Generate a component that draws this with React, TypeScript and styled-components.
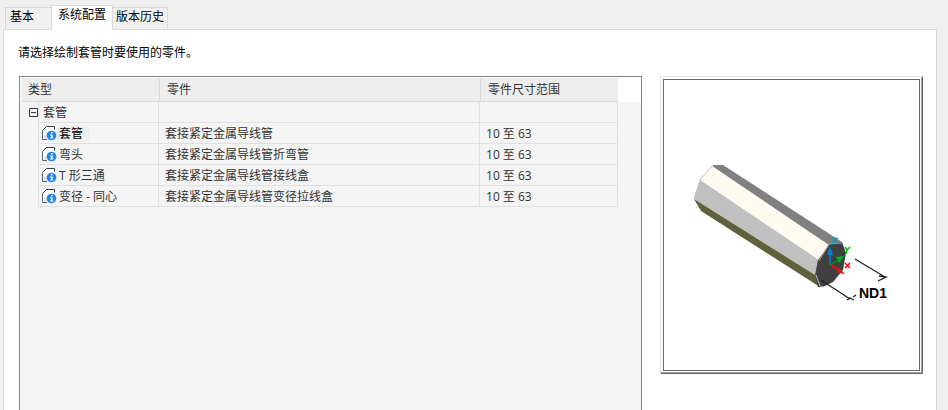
import React, { useState } from "react";
import styled, { createGlobalStyle } from "styled-components";

const GlobalStyle = createGlobalStyle`
  *, *::before, *::after { box-sizing: border-box; }
  body {
    margin: 0;
    background: #f0f0f0;
    color: #000;
    font: 12px/16px "Open Sans", "Noto Sans CJK SC", sans-serif;
  }
`;

const Page = styled.main`
  display: flex;
  flex-direction: column;
  min-height: 100vh;
  padding: 5px 11px 0 3px;
`;

const TabList = styled.div`
  display: flex;
  align-items: flex-end;
  height: 25px;
  margin-bottom: -1px;
  padding-left: 2px;
`;

const Tab = styled.button<{ $active: boolean; $wide?: boolean }>`
  position: relative;
  height: ${(p) => (p.$active ? 25 : 23)}px;
  padding: ${(p) => (p.$active ? "0 6px 5px" : p.$wide ? "0 17px 3px 4px" : "0 3px 3px")};
  border: 1px solid #d9d9d9;
  border-bottom-color: ${(p) => (p.$active ? "#fff" : "#d9d9d9")};
  margin-right: -1px;
  z-index: ${(p) => (p.$active ? 1 : 0)};
  background: ${(p) => (p.$active ? "#fff" : "#f0f0f0")};
  color: #000;
  font: inherit;
`;

const Panel = styled.section`
  flex: 1;
  display: flex;
  flex-direction: column;
  padding: 15px 13px 0 15px;
  border: 1px solid #d9d9d9;
  border-bottom: 0;
  background: #fff;
`;

const Prompt = styled.p`
  margin: 0 0 15px -1px;
`;

const Columns = styled.div`
  flex: 1;
  display: flex;
  gap: 18px;
`;

const GridFrame = styled.div`
  flex: 1;
  padding: 1px;
  border: 1px solid #828790;
  border-bottom: 0;
  background: linear-gradient(#fff 25px, #f4f4f4 25px);
`;

const PartTable = styled.table`
  width: 597px;
  border-spacing: 0;
  table-layout: fixed;
  color: #333;
`;

const HeadCell = styled.th`
  height: 24px;
  padding: 0 7px;
  border-bottom: 1px solid #d9d9d9;
  background: #eee;
  font-weight: 400;
  text-align: left;

  & + & {
    border-left: 1px solid #d9d9d9;
  }
`;

const Cell = styled.td`
  height: 21px;
  padding: 2px 6px 0;
  border-right: 1px solid #e0e0e0;
  border-bottom: 1px solid #e0e0e0;
`;

const Gutter = styled.td`
  padding: 0 0 0 8px;
  border-right: 1px solid #e0e0e0;
`;

const TypeCell = styled(Cell)`
  padding: 2px 3px 0;
`;

const TypeLabel = styled.span<{ $selected?: boolean }>`
  display: flex;
  align-items: center;
  color: ${(p) => (p.$selected ? "#000" : "inherit")};
`;

const LabelText = styled.span<{ $selected?: boolean }>`
  padding: 0 6px 0 2px;
  background: ${(p) => (p.$selected ? "#eee" : "transparent")};
`;

const GroupLabel = styled.span`
  padding-left: 1px;
`;

const Toggle = styled.button`
  display: block;
  width: 9px;
  height: 9px;
  padding: 0;
  border: 0;
  background: none;

  svg { display: block; }
`;

const Preview = styled.figure`
  flex: none;
  align-self: flex-start;
  width: 263px;
  margin: 0;
  border: 1px solid;
  border-color: #e3e3e3 #696969 #696969 #e3e3e3;
`;

const PreviewBevel = styled.div`
  padding: 1px;
  border: 1px solid;
  border-color: #fff #a0a0a0 #a0a0a0 #fff;
`;

const PreviewCanvas = styled.div`
  border: 1px solid #696969;
  background: #fff;

  svg { display: block; width: 100%; height: auto; }
`;

function PartIcon() {
  return (
    <svg width="15" height="16" viewBox="0 0 15 16" aria-hidden="true">
      <path d="M4.5.5h8v13H.5v-9z" fill="#fff" />
      <path d="M2 9h5v4H2z" fill="#dde3ea" />
      <path d="M.5 4.5v9H5" fill="none" stroke="#5b626c" />
      <path d="M.5 4.5l4-4h8v3" fill="none" stroke="#333b45" />
      <circle cx="9.5" cy="9.5" r="4.8" fill="#1e86f0" />
      <path d="M9 6h1.6v1.5H9zM8 8.4h2.6v3h.8v1H8v-1h1V9.4H8z" fill="#fff" />
    </svg>
  );
}

function ConduitDrawing() {
  return (
    <svg viewBox="664 80 255 290" role="img" aria-label="ND1">
      <path d="M712 166l2-1h9l119 77-13 5z" fill="#808080" />
      <path d="M712 166l-12 14 119 82 10-17z" fill="#fffbf0" />
      <path d="M700 180l-6 19 121 76 4-15z" fill="#c0c0c0" />
      <path d="M694 199l7 12 119 76-5-12z" fill="#60603c" />
      <path d="M712 166l-12 14-6 19" fill="none" stroke="#c0c0c0" />
      <path d="M830 244l12-2 4 11-3 17-10 12-10 5h-5l-3-12 3-15z" fill="#404040" />
      <path d="M819 261l10-17 13-1" fill="none" stroke="#a0a0a0" />
      <path d="M816 275l4 11 4 1" fill="none" stroke="#c0c0c0" />
      <path d="M830 265v-13" stroke="#0070b8" strokeWidth="2" />
      <path d="M827 255l3-9 3 9z" fill="#0080d0" />
      <path d="M830 265l9-5" stroke="#008c20" strokeWidth="2" />
      <path d="M836 257l8-1-5 7z" fill="#00b020" />
      <path d="M831 265l9 6" stroke="#f00" strokeWidth="2" />
      <path d="M839 268l6 6-8-1z" fill="#d02010" />
      <path d="M832 238.500h5l-4 4h4" fill="none" stroke="#00a0c0" strokeWidth="1.500" />
      <path d="M845 247l2 3 3-3m-3 3l-1 4" fill="none" stroke="#00c000" strokeWidth="1.500" />
      <path d="M845 263l5 5m0-5l-5 5" fill="none" stroke="#f00" strokeWidth="1.500" />
      <path d="M855 259l30 18m-6-1l7 1-8 4M821 280l29 19m-3 1l3-2 4 2m-1-3l3-2" fill="none" stroke="#202020" strokeWidth="1.300" />
      <text x="859" y="298" fontFamily="Liberation Sans, sans-serif" fontWeight="700" fontSize="14">ND1</text>
    </svg>
  );
}

const TABS = ["基本", "系统配置", "版本历史"];

const PARTS = [
  { type: "套管", part: "套接紧定金属导线管", range: "10 至 63" },
  { type: "弯头", part: "套接紧定金属导线管折弯管", range: "10 至 63" },
  { type: "T 形三通", part: "套接紧定金属导线管接线盒", range: "10 至 63" },
  { type: "变径 - 同心", part: "套接紧定金属导线管变径拉线盒", range: "10 至 63" },
];

export default function App() {
  const [active, setActive] = useState(1);
  const [open, setOpen] = useState(true);

  return (
    <Page>
      <GlobalStyle />
      <TabList role="tablist">
        {TABS.map((name, i) => (
          <Tab
            key={name}
            type="button"
            role="tab"
            aria-selected={i === active}
            $active={i === active}
            $wide={i === 0}
            onClick={() => setActive(i)}
          >
            {name}
          </Tab>
        ))}
      </TabList>
      <Panel role="tabpanel">
        <Prompt>请选择绘制套管时要使用的零件。</Prompt>
        <Columns>
          <GridFrame>
            <PartTable>
              <colgroup>
                <col width="18" />
                <col width="120" />
                <col width="321" />
                <col width="138" />
              </colgroup>
              <thead>
                <tr>
                  <HeadCell colSpan={2}>类型</HeadCell>
                  <HeadCell>零件</HeadCell>
                  <HeadCell>零件尺寸范围</HeadCell>
                </tr>
              </thead>
              <tbody>
                <tr>
                  <Gutter>
                    <Toggle type="button" aria-label="套管" aria-expanded={open} onClick={() => setOpen(!open)}>
                      <svg width="9" height="9" viewBox="0 0 9 9">
                        <path d="M.5.5h8v8h-8zM2 4.5h5" fill="none" stroke="#333b45" />
                        {!open && <path d="M4.5 2v5" stroke="#333b45" />}
                      </svg>
                    </Toggle>
                  </Gutter>
                  <TypeCell>
                    <GroupLabel>套管</GroupLabel>
                  </TypeCell>
                  <Cell />
                  <Cell />
                </tr>
                {open &&
                  PARTS.map((row, i) => (
                    <tr key={row.type}>
                      <Gutter />
                      <TypeCell>
                        <TypeLabel $selected={i === 0}>
                          <PartIcon />
                          <LabelText $selected={i === 0}>{row.type}</LabelText>
                        </TypeLabel>
                      </TypeCell>
                      <Cell>{row.part}</Cell>
                      <Cell>{row.range}</Cell>
                    </tr>
                  ))}
              </tbody>
            </PartTable>
          </GridFrame>
          <Preview>
            <PreviewBevel>
              <PreviewCanvas>
                <ConduitDrawing />
              </PreviewCanvas>
            </PreviewBevel>
          </Preview>
        </Columns>
      </Panel>
    </Page>
  );
}
